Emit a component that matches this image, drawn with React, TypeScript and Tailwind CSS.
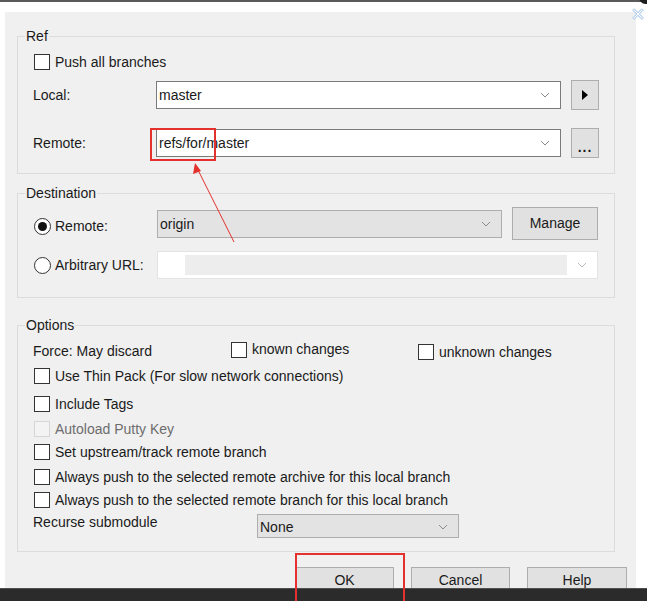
import React from "react";

const Chevron = ({ light }: { light?: boolean }) => (
  <svg width="10" height="6" viewBox="0 0 10 6" className="shrink-0">
    <polyline
      points="1,1 5,5 9,1"
      fill="none"
      stroke={light ? "#b8b8b8" : "#8a8a8a"}
      strokeWidth="1"
    />
  </svg>
);

const CheckBox = ({ disabled }: { disabled?: boolean }) => (
  <span
    className={
      disabled
        ? "block w-[16px] h-[16px] shrink-0 border border-[#d6d6d6] bg-[#f3f3f3]"
        : "block w-[16px] h-[16px] shrink-0 border border-[#333333] bg-white"
    }
  />
);

const Radio = ({ checked }: { checked?: boolean }) => (
  <span className="flex items-center justify-center w-[17px] h-[17px] shrink-0 rounded-full border border-[#333333] bg-white">
    {checked && <span className="block w-[9px] h-[9px] rounded-full bg-[#111111]" />}
  </span>
);

type ComboProps = {
  value: string;
  className: string;
  grey?: boolean;
};

const Combo = ({ value, className, grey }: ComboProps) => (
  <div
    className={
      "flex items-center justify-between pl-[2px] pr-[10px] border " +
      (grey ? "bg-[#e3e3e3] border-[#adadad] " : "bg-white border-[#7a7a7a] ") +
      className
    }
  >
    <span className="leading-[16px]">{value}</span>
    <Chevron />
  </div>
);

const Button = ({ children, className }: { children: React.ReactNode; className: string }) => (
  <div
    className={
      "flex items-center justify-center shrink-0 bg-[#e1e1e1] border border-[#adadad] " + className
    }
  >
    {children}
  </div>
);

const CheckRow = ({ label, className, disabled }: { label: string; className: string; disabled?: boolean }) => (
  <div className={"flex items-center h-[16px] gap-[5px] " + className}>
    <CheckBox disabled={disabled} />
    <span className={disabled ? "text-[#6d6d6d]" : ""}>{label}</span>
  </div>
);

const Group = ({
  title,
  className,
  children,
}: {
  title: string;
  className: string;
  children: React.ReactNode;
}) => (
  <fieldset className={"border border-[#dcdcdc] p-0 m-0 " + className}>
    <legend className="ml-[7px] px-[1px] leading-[16px]">{title}</legend>
    {children}
  </fieldset>
);

export default function App() {
  return (
    <div className="relative w-[647px] h-[601px] overflow-hidden bg-white flex flex-col text-[14px] text-[#1a1a1a] font-['Liberation_Sans',Arial,sans-serif]">
      <div className="h-[2px] bg-[#5a5a5a] shrink-0" />
      <div className="h-[10px] shrink-0" />

      <div className="ml-[5px] w-[631px] h-[576px] shrink-0 overflow-hidden bg-[#f0f0f0] pl-[12px] pt-[16px]">
        <Group title="Ref" className="w-[598px]">
          <div className="pt-[10px] pb-[15px] pl-[16px] pr-[15px]">
            <CheckRow label="Push all branches" className="" />

            <div className="mt-[10px] h-[30px] flex items-center">
              <span className="w-[123px] shrink-0 -ml-[1px]">Local:</span>
              <Combo value="master" className="w-[405px] h-[28px]" />
              <Button className="ml-[10px] w-[28px] h-[30px]">
                <svg width="6" height="10" viewBox="0 0 6 10">
                  <polygon points="0,0 6,5 0,10" fill="#000" />
                </svg>
              </Button>
            </div>

            <div className="mt-[18px] h-[30px] flex items-center">
              <span className="w-[123px] shrink-0 -ml-[1px]">Remote:</span>
              <Combo value="refs/for/master" className="w-[405px] h-[28px]" />
              <Button className="ml-[10px] w-[28px] h-[30px]">
                <span className="leading-[10px] pt-[7px] tracking-[1px] font-bold">...</span>
              </Button>
            </div>
          </div>
        </Group>

        <Group title="Destination" className="w-[598px] mt-[11px]">
          <div className="pt-[6px] pb-[18px] pl-[16px] pr-[16px]">
            <div className="h-[33px] flex items-center">
              <div className="w-[123px] shrink-0 flex items-center gap-[4px] pt-[6px]">
                <Radio checked />
                <span>Remote:</span>
              </div>
              <Combo value="origin" grey className="w-[345px] h-[28px]" />
              <Button className="ml-[10px] w-[86px] h-[33px]">Manage</Button>
            </div>

            <div className="mt-[11px] h-[28px] flex items-center">
              <div className="w-[123px] shrink-0 flex items-center gap-[4px] pt-[1px]">
                <Radio />
                <span>Arbitrary URL:</span>
              </div>
              <div className="flex items-center w-[441px] h-[28px] bg-white border border-[#e3e3e3] pl-[27px] pr-[10px]">
                <div className="flex-1 h-[20px] bg-[#ededed]" />
                <div className="ml-[10px]">
                  <Chevron light />
                </div>
              </div>
            </div>
          </div>
        </Group>

        <Group title="Options" className="w-[598px] mt-[19px]">
          <div className="pt-[9px] pb-[13px] pl-[16px] pr-[16px]">
            <div className="flex items-start h-[19px]">
              <span className="w-[198px] shrink-0 -ml-[1px] pt-[1px] leading-[16px]">Force: May discard</span>
              <div className="w-[187px] shrink-0 flex items-center h-[16px] gap-[5px]">
                <CheckBox />
                <span className="-mt-[2px]">known changes</span>
              </div>
              <div className="flex items-center h-[16px] gap-[5px] mt-[2px]">
                <CheckBox />
                <span>unknown changes</span>
              </div>
            </div>

            <CheckRow label="Use Thin Pack (For slow network connections)" className="mt-[7px]" />
            <CheckRow label="Include Tags" className="mt-[12px]" />
            <CheckRow label="Autoload Putty Key" disabled className="mt-[9px]" />
            <CheckRow label="Set upstream/track remote branch" className="mt-[7px]" />
            <CheckRow label="Always push to the selected remote archive for this local branch" className="mt-[9px]" />
            <CheckRow label="Always push to the selected remote branch for this local branch" className="mt-[7px]" />

            <div className="mt-[6px] flex items-start">
              <span className="w-[224px] shrink-0 -ml-[1px] leading-[16px]">Recurse submodule</span>
              <Combo value="None" grey className="w-[202px] h-[24px] pt-[2px]" />
            </div>
          </div>
        </Group>

        <div className="mt-[15px] flex justify-end gap-[17px] pr-[9px]">
          <Button className="w-[99px] h-[26px]">OK</Button>
          <Button className="w-[99px] h-[26px]">Cancel</Button>
          <Button className="w-[100px] h-[26px]">Help</Button>
        </div>
      </div>

      <div className="flex-1 bg-[#2b2b2b] border-t border-[#505050]" />

      {/* close glyph at the window corner */}
      <svg className="absolute left-[632px] top-[8px]" width="12" height="12" viewBox="0 0 12 12">
        <path d="M2 2 L10 10 M10 2 L2 10" stroke="#b9d3ec" strokeWidth="3" strokeLinecap="round" />
        <path d="M2 2 L10 10 M10 2 L2 10" stroke="#ffffff" strokeWidth="1" strokeLinecap="round" />
      </svg>
      <div className="absolute left-[639px] -top-[9px] w-[14px] h-[13px] rounded-full bg-[#1e1e1e]" />

      {/* red annotations */}
      <div className="absolute left-[150px] top-[128px] w-[66px] h-[33px] border-2 border-[#e3322d]" />
      <div className="absolute left-[295px] top-[553px] w-[110px] h-[70px] border-2 border-[#e3322d]" />
      <svg className="absolute left-0 top-0 pointer-events-none" width="647" height="601">
        <line x1="234" y1="242" x2="198" y2="170" stroke="#e3322d" strokeWidth="1" />
        <polygon points="195,163 193,174 201,171" fill="#e3322d" />
      </svg>
    </div>
  );
}
